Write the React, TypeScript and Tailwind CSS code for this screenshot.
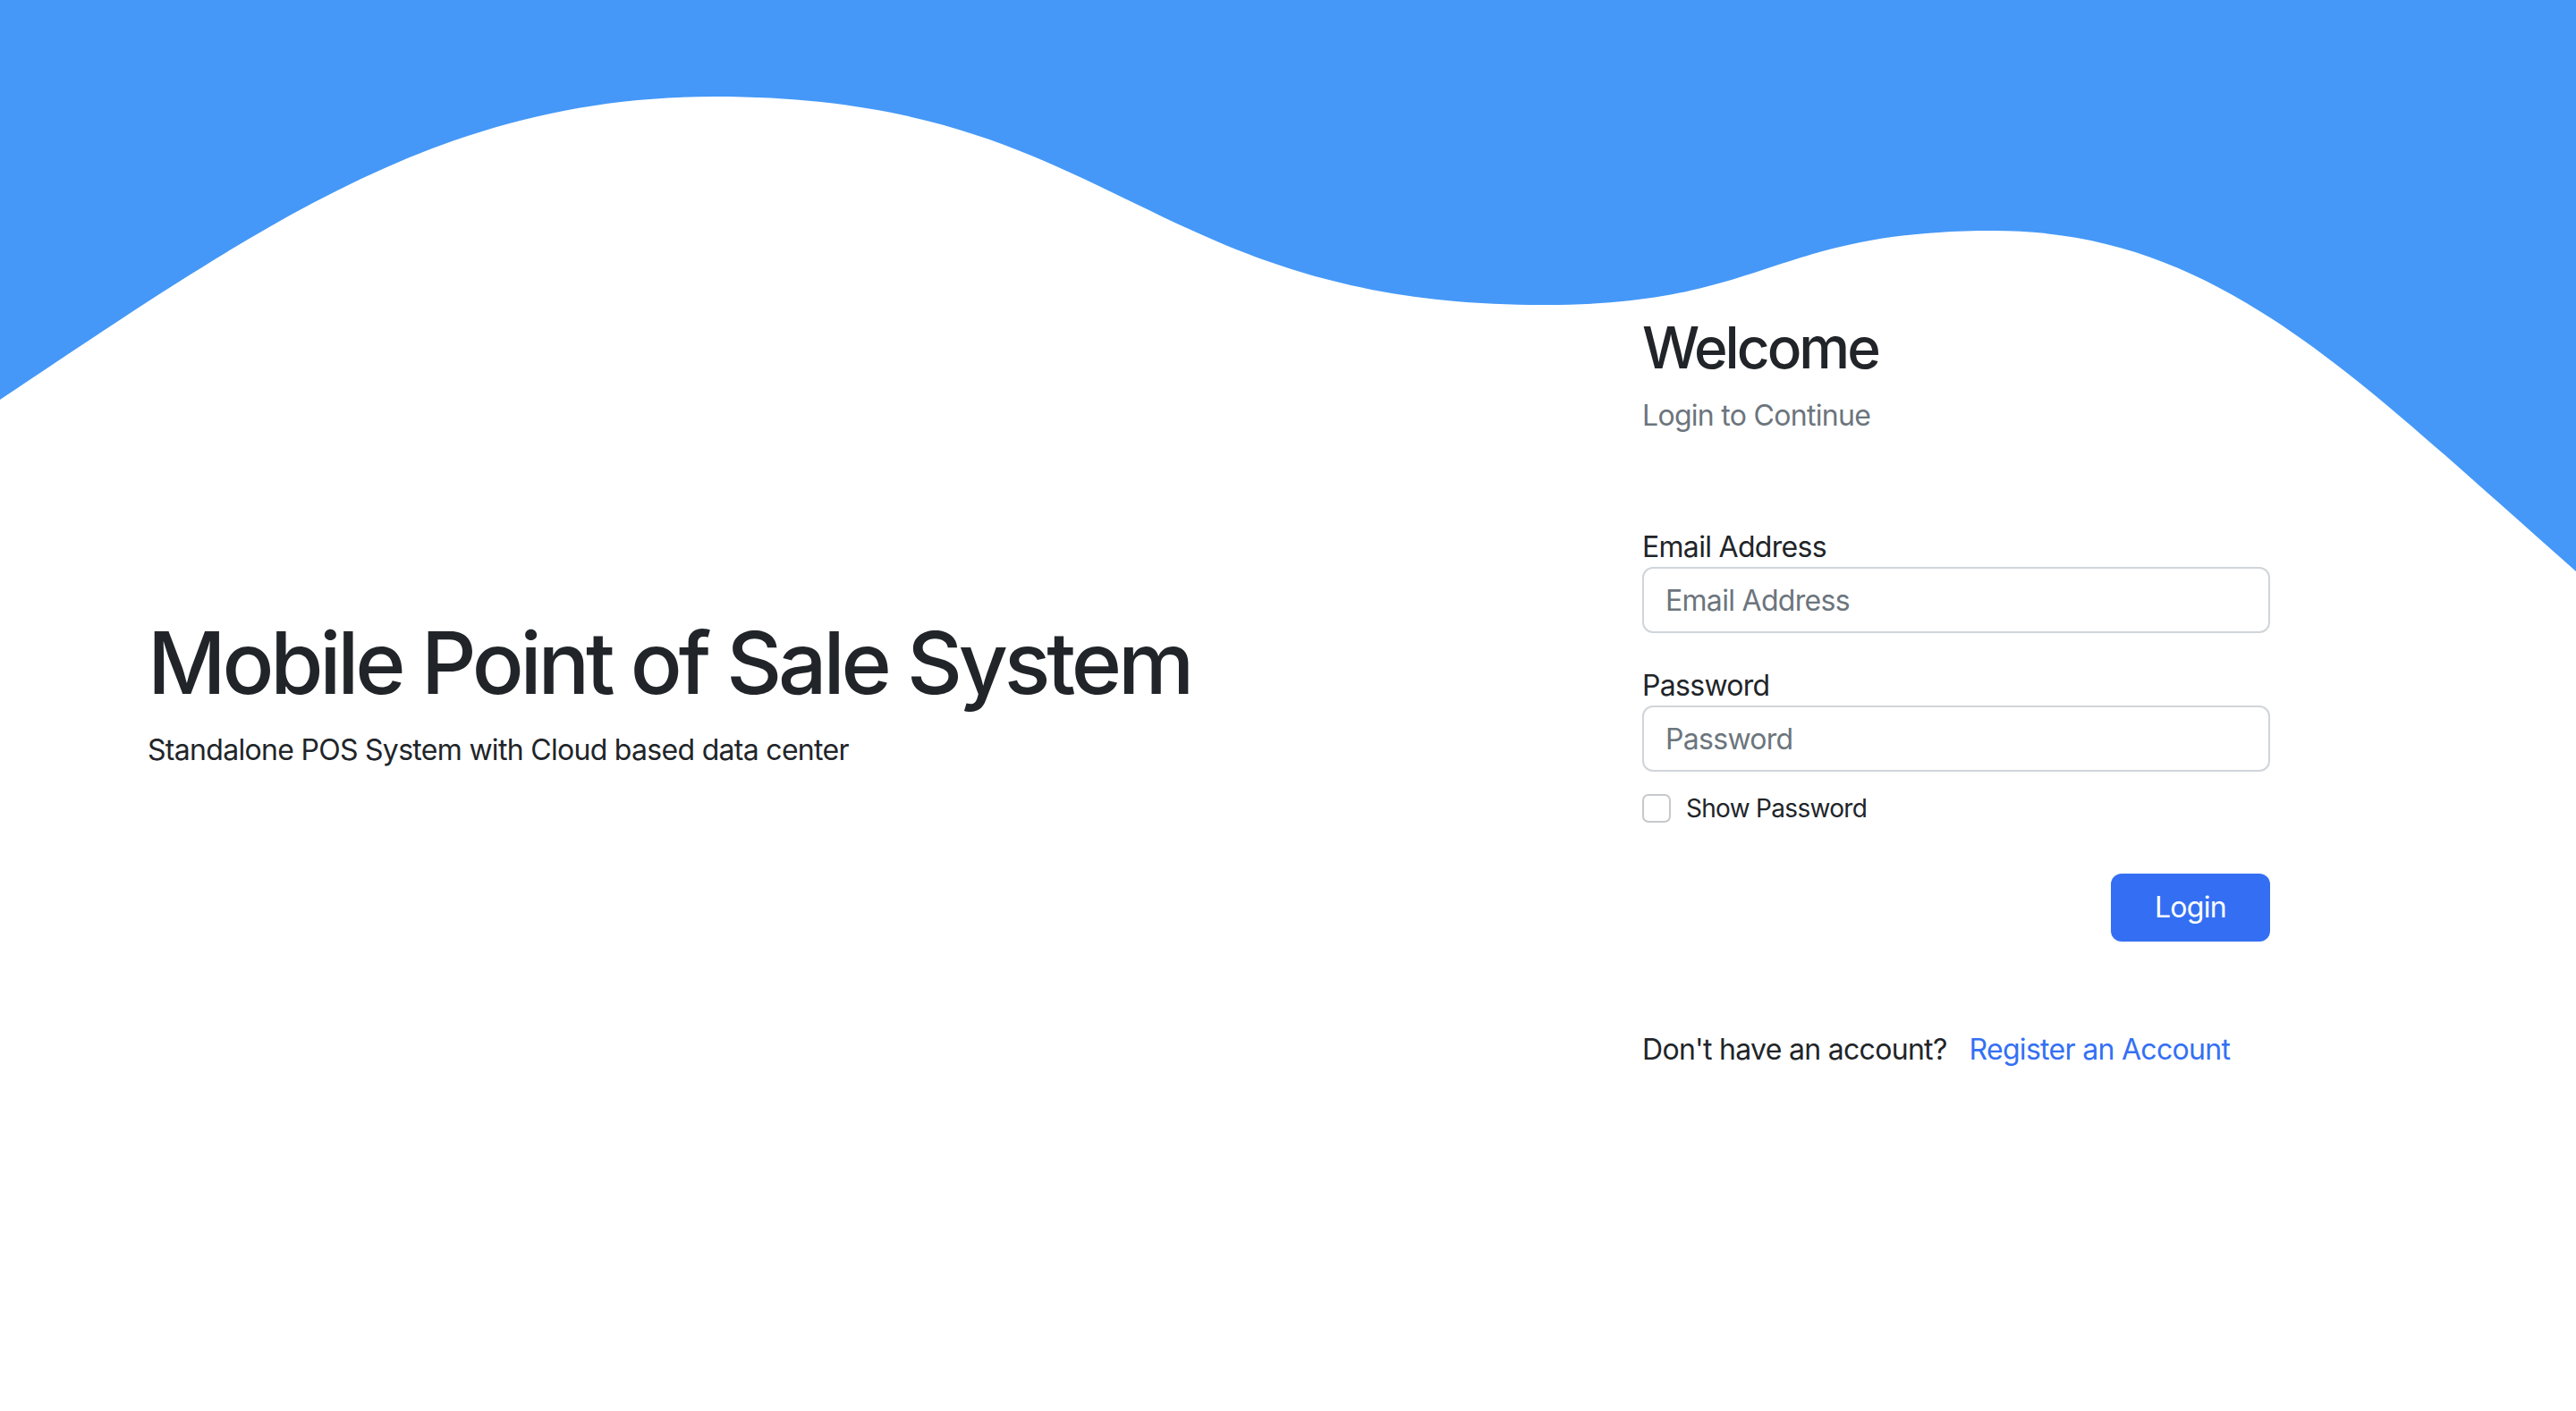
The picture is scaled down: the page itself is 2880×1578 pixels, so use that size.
import React, { useState } from "react";

function Wave() {
  return (
    <svg
      className="absolute left-0 top-0 w-full h-[700px]"
      viewBox="0 0 2880 700"
      preserveAspectRatio="none"
    >
      <path
        fill="#4598f7"
        d="M0,0 L0,447 C300,246 499,108 799,108 C1249,108 1277,341 1727,341 C1977,341 1979,258 2229,258 C2479,258 2630,419 2880,639 L2880,0 Z"
      />
    </svg>
  );
}

export default function App() {
  const [email, setEmail] = useState("");
  const [password, setPassword] = useState("");
  const [show, setShow] = useState(false);

  return (
    <div className="relative min-h-[1578px] w-full overflow-hidden bg-white text-[#212529] tracking-[-0.7px] font-['Inter','Liberation_Sans',sans-serif]">
      <Wave />
      <div className="relative flex">
        {/* left */}
        <div className="w-[1836px] pl-[165px] pt-[684px]">
          <h1 className="text-[96px] leading-[115px] font-medium tracking-[-4.2px]">
            Mobile Point of Sale System
          </h1>
          <p className="mt-[16px] text-[32px] leading-[48px]">
            Standalone POS System with Cloud based data center
          </p>
        </div>

        {/* right */}
        <div className="w-[702px] pt-[351px]">
          <h2 className="text-[64px] leading-[76px] font-medium tracking-[-3px]">Welcome</h2>
          <p className="mt-[14px] text-[32px] leading-[48px] text-[#6c757d]">
            Login to Continue
          </p>

          <div className="mt-[101px]">
            <label className="block text-[32px] leading-[44px]">Email Address</label>
            <input
              value={email}
              onChange={(e) => setEmail(e.target.value)}
              placeholder="Email Address"
              className="block w-full h-[74px] border-2 border-[#d0d5da] rounded-[12px] px-[24px] text-[32px] placeholder:text-[#6c757d] outline-none"
            />
          </div>

          <div className="mt-[37px]">
            <label className="block text-[32px] leading-[44px]">Password</label>
            <input
              type={show ? "text" : "password"}
              value={password}
              onChange={(e) => setPassword(e.target.value)}
              placeholder="Password"
              className="block w-full h-[74px] border-2 border-[#d0d5da] rounded-[12px] px-[24px] text-[32px] placeholder:text-[#6c757d] outline-none"
            />
          </div>

          <label className="mt-[25px] flex items-center gap-[17px] text-[28px] leading-[32px]">
            <input
              type="checkbox"
              checked={show}
              onChange={() => setShow(!show)}
              className="appearance-none w-[32px] h-[32px] border-2 border-[#c6c9cc] rounded-[7px] bg-white"
            />
            Show Password
          </label>

          <div className="mt-[57px] flex justify-end">
            <button className="w-[178px] h-[76px] rounded-[12px] bg-[#346ff3] text-white text-[32px]">
              Login
            </button>
          </div>

          <div className="mt-[97px] flex gap-[25px] text-[32px] leading-[48px]">
            <span>Don't have an account?</span>
            <a href="#" className="text-[#3470f3]">
              Register an Account
            </a>
          </div>
        </div>
      </div>
    </div>
  );
}
